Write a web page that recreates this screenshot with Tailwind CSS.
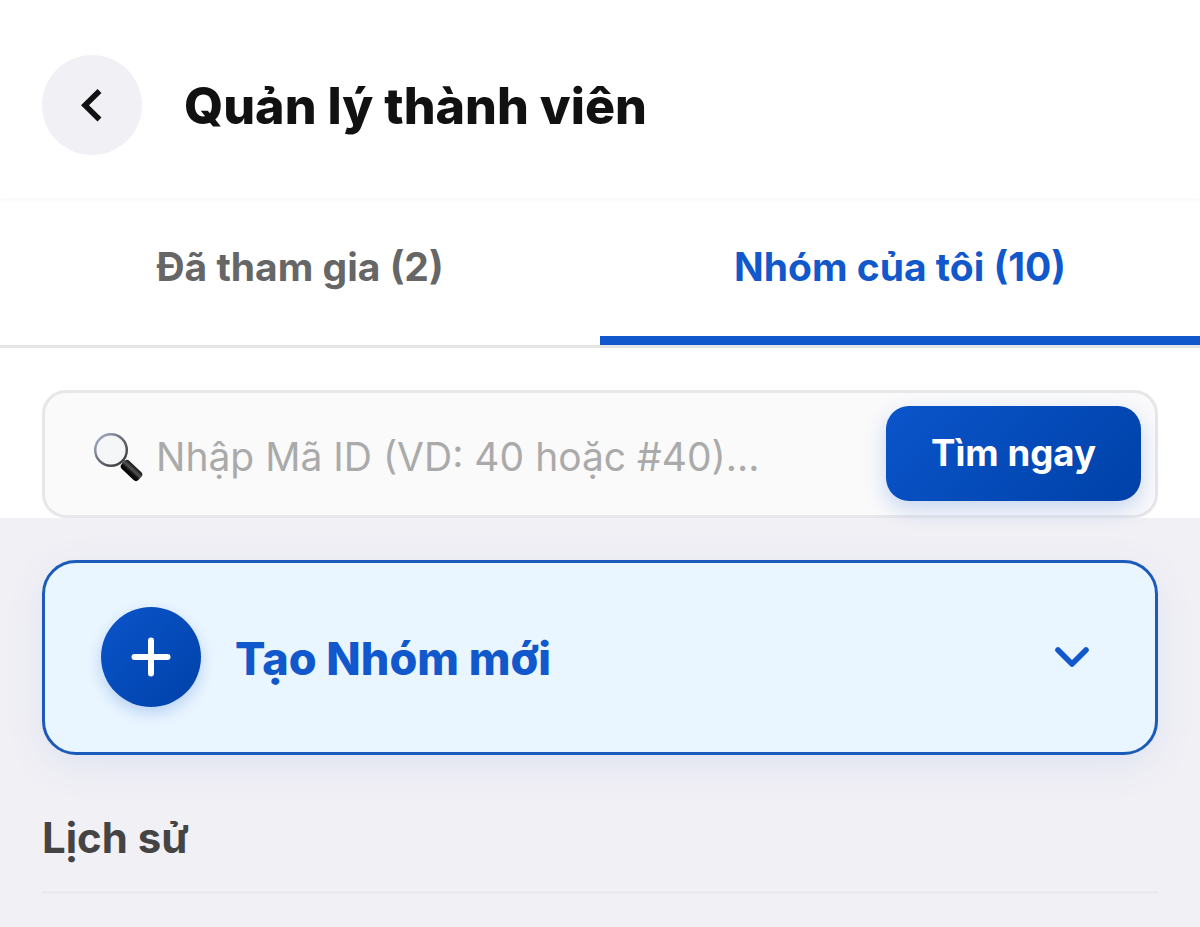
<!DOCTYPE html>
<html lang="vi">
<head>
    <meta charset="UTF-8">
    <meta name="viewport" content="width=device-width, initial-scale=1.0">
    <title>Quản lý thành viên</title>
    <script src="https://cdn.jsdelivr.net/npm/@tailwindcss/browser@4"></script>
</head>
<body class="bg-[#f1f0f5] font-['Inter',sans-serif] h-[927px] overflow-hidden">
<header class="relative z-10 h-[198px] bg-white flex items-center pt-3 px-[42px] gap-[42px] shadow-[0_2px_5px_rgba(0,0,0,0.04)]">
    <button class="w-[100px] h-[100px] rounded-full bg-[#f1f0f5] flex items-center justify-center">
        <svg class="w-[100px] h-[100px]" viewBox="0 0 100 100" fill="none" stroke="#111111" stroke-width="5.6">
            <path d="M57.5 36 L43 50.2 L57.5 64.5"/>
        </svg>
    </button>
    <h1 class="pt-[2px] text-[50.2px] leading-[60px] font-extrabold text-[#111111] whitespace-nowrap">Quản lý thành viên</h1>
</header>

<main class="bg-white h-[320px]">
    <nav class="flex h-[150px] border-b-3 border-[#e5e5e5]">
        <button class="flex-1 pb-[9px] text-[39px] font-bold text-[#666666]">Đã tham gia (2)</button>
        <button class="flex-1 border-b-9 border-[#1058cc] text-[39px] font-bold text-[#1058cc]">Nhóm của tôi (10)</button>
    </nav>
    <div class="mx-[42px] mt-[42px] h-[128px] rounded-[24px] border-3 border-[#e7e7ea] bg-[#fafafb] flex items-center justify-between pl-[47px] pr-[14px]">
        <div class="flex items-center pt-[6px]">
            <svg class="w-[54px] h-[54px]" viewBox="0 0 54 54" fill="none">
                <defs>
                    <linearGradient id="rim" x1="0" y1="0" x2="1" y2="1">
                        <stop offset="0" stop-color="#a9b8dc"/>
                        <stop offset="0.45" stop-color="#6d7077"/>
                        <stop offset="1" stop-color="#303236"/>
                    </linearGradient>
                    <linearGradient id="handle" x1="0" y1="0" x2="0" y2="1">
                        <stop offset="0" stop-color="#111111"/>
                        <stop offset="0.4" stop-color="#555555"/>
                        <stop offset="0.65" stop-color="#111111"/>
                        <stop offset="1" stop-color="#000000"/>
                    </linearGradient>
                </defs>
                <path d="M30 30 L35 35" stroke="#777777" stroke-width="4"/>
                <circle cx="19" cy="20" r="15.8" fill="#f5f6f7" stroke="url(#rim)" stroke-width="2.4"/>
                <rect x="-11.5" y="-5.5" width="23" height="11" rx="3.5" fill="url(#handle)" transform="translate(39.5 40.5) rotate(43)"/>
            </svg>
            <span class="ml-[10px] text-[39px] text-[#aaaaaa] whitespace-nowrap">Nhập Mã ID (VD: 40 hoặc #40)...</span>
        </div>
        <button class="mb-px w-[255px] h-[95px] rounded-[23px] bg-linear-135 from-[#0b55cb] to-[#0041a8] text-white text-[36.6px] font-bold shadow-[0_8px_22px_rgba(16,88,204,0.22)]">Tìm ngay</button>
    </div>
</main>

<section class="px-[42px] pt-[42px]">
    <div class="h-[195px] rounded-[34px] border-3 border-[#1c5bb9] bg-[#e9f5ff] flex items-center pl-[56px] pr-[66px] shadow-[0_11px_42px_rgba(16,88,204,0.08)]">
        <div class="mb-px w-[100px] h-[100px] rounded-full bg-linear-135 from-[#0b55cb] to-[#0041a8] flex items-center justify-center shadow-[0_6px_14px_rgba(16,88,204,0.22)]">
            <svg class="w-[40px] h-[40px]" viewBox="0 0 40 40" fill="none" stroke="#ffffff" stroke-width="6" stroke-linecap="round">
                <path d="M20 3.5 V36.5 M3.5 20 H36.5"/>
            </svg>
        </div>
        <span class="ml-[34px] pt-[2px] text-[45px] font-extrabold text-[#1058cc] whitespace-nowrap">Tạo Nhóm mới</span>
        <svg class="ml-auto mb-px w-[34px] h-[22px]" viewBox="0 0 34 22" fill="none" stroke="#1058cc" stroke-width="5.6" stroke-linecap="round" stroke-linejoin="round">
            <path d="M3 4 L17 18 L31 4"/>
        </svg>
    </div>
    <div class="mt-[46px] h-[93px] border-b-3 border-[#ebebed]">
        <h2 class="pt-[11px] text-[41.9px] leading-[52px] font-bold text-[#444444]">Lịch sử</h2>
    </div>
</section>
</body>
</html>
